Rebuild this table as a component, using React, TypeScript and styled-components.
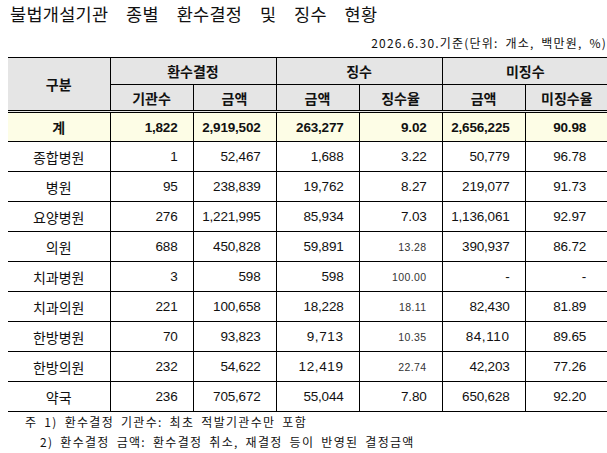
import React from "react";
import styled, { createGlobalStyle } from "styled-components";

const GlobalStyle = createGlobalStyle`
  html, body {
    margin: 0;
    padding: 0;
    background: #ffffff;
    overflow: hidden;
  }
  body {
    font-family: "Noto Sans CJK KR", "Liberation Sans", sans-serif;
    color: #000;
  }
`;

const Page = styled.div`
  width: 607px;
  display: flex;
  flex-direction: column;
`;

const Title = styled.h1`
  margin: 0;
  height: 28px;
  line-height: 28px;
  padding-left: 10px;
  font-family: "Noto Sans CJK KR", sans-serif;
  font-size: 17.5px;
  font-weight: 400;
  letter-spacing: 0.3px;
  word-spacing: 13.5px;
  color: #111;
`;

const Basis = styled.div`
  height: 29px;
  line-height: 29px;
  text-align: right;
  padding-right: 0;
  font-family: "Noto Sans CJK KR", sans-serif;
  font-size: 12px;
  letter-spacing: 1.2px;
  word-spacing: 3px;
  color: #111;
`;

const Table = styled.table`
  margin-left: 8px;
  width: 600px;
  border-collapse: collapse;
  table-layout: fixed;
  font-family: "Liberation Sans", "Noto Sans CJK KR", sans-serif;
`;

const HeadRow = styled.tr<{ $h: number }>`
  height: ${(p) => p.$h}px;
`;

const Th = styled.th<{ $double?: boolean }>`
  background: #e5e5e5;
  border: 1px solid #000;
  border-bottom: ${(p) => (p.$double ? "3px double #000" : "1px solid #000")};
  padding: 0;
  font-family: "Noto Sans CJK KR", sans-serif;
  font-size: 14px;
  font-weight: 700;
  color: #111;
  text-align: center;
  &:first-child {
    border-left: none;
  }
  &:last-child {
    border-right: none;
  }
`;

const Row = styled.tr<{ $total?: boolean }>`
  height: 30px;
  background: ${(p) => (p.$total ? "#fdfde6" : "#ffffff")};
  font-weight: ${(p) => (p.$total ? 700 : 400)};
`;

const Label = styled.td`
  border: 1px solid #000;
  border-left: none;
  padding: 0;
  text-align: center;
  font-family: "Noto Sans CJK KR", sans-serif;
  font-size: 14px;
  color: #111;
`;

const Num = styled.td<{ $kind?: "small" | "spaced"; $last?: boolean }>`
  border: 1px solid #000;
  border-right: ${(p) => (p.$last ? "none" : "1px solid #000")};
  padding: 0 ${(p) => (p.$last ? 22 : 15)}px 0 0;
  text-align: right;
  font-size: ${(p) => (p.$kind === "small" ? "10.5px" : "13.5px")};
  letter-spacing: ${(p) =>
    p.$kind === "small" ? "0.4px" : p.$kind === "spaced" ? "0.6px" : "-0.2px"};
  color: ${(p) => (p.$kind === "small" ? "#333" : "#111")};
`;

const Notes = styled.div`
  display: flex;
  flex-direction: column;
  font-family: "Noto Sans CJK KR", sans-serif;
  font-size: 12px;
  letter-spacing: 1.3px;
  word-spacing: 3px;
  color: #111;
`;

const Note = styled.div<{ $indent: number }>`
  height: 20px;
  line-height: 20px;
  padding-left: ${(p) => p.$indent}px;
`;

type Cell = { v: string; kind?: "small" | "spaced" };

const rows: { name: string; total?: boolean; cells: Cell[] }[] = [
  {
    name: "계",
    total: true,
    cells: [{ v: "1,822" }, { v: "2,919,502" }, { v: "263,277" }, { v: "9.02" }, { v: "2,656,225" }, { v: "90.98" }],
  },
  {
    name: "종합병원",
    cells: [{ v: "1" }, { v: "52,467" }, { v: "1,688" }, { v: "3.22" }, { v: "50,779" }, { v: "96.78" }],
  },
  {
    name: "병원",
    cells: [{ v: "95" }, { v: "238,839" }, { v: "19,762" }, { v: "8.27" }, { v: "219,077" }, { v: "91.73" }],
  },
  {
    name: "요양병원",
    cells: [{ v: "276" }, { v: "1,221,995" }, { v: "85,934" }, { v: "7.03" }, { v: "1,136,061" }, { v: "92.97" }],
  },
  {
    name: "의원",
    cells: [{ v: "688" }, { v: "450,828" }, { v: "59,891" }, { v: "13.28", kind: "small" }, { v: "390,937" }, { v: "86.72" }],
  },
  {
    name: "치과병원",
    cells: [{ v: "3" }, { v: "598" }, { v: "598" }, { v: "100.00", kind: "small" }, { v: "-" }, { v: "-" }],
  },
  {
    name: "치과의원",
    cells: [{ v: "221" }, { v: "100,658" }, { v: "18,228" }, { v: "18.11", kind: "small" }, { v: "82,430" }, { v: "81.89" }],
  },
  {
    name: "한방병원",
    cells: [{ v: "70" }, { v: "93,823" }, { v: "9,713", kind: "spaced" }, { v: "10.35", kind: "small" }, { v: "84,110", kind: "spaced" }, { v: "89.65" }],
  },
  {
    name: "한방의원",
    cells: [{ v: "232" }, { v: "54,622" }, { v: "12,419", kind: "spaced" }, { v: "22.74", kind: "small" }, { v: "42,203" }, { v: "77.26" }],
  },
  {
    name: "약국",
    cells: [{ v: "236" }, { v: "705,672" }, { v: "55,044" }, { v: "7.80" }, { v: "650,628" }, { v: "92.20" }],
  },
];

export default function App() {
  return (
    <Page>
      <GlobalStyle />
      <Title>불법개설기관 종별 환수결정 및 징수 현황</Title>
      <Basis>2026.6.30.기준(단위: 개소, 백만원, %)</Basis>
      <Table>
        <colgroup>
          <col style={{ width: 102 }} />
          <col style={{ width: 83 }} />
          <col style={{ width: 83 }} />
          <col style={{ width: 83 }} />
          <col style={{ width: 83 }} />
          <col style={{ width: 83 }} />
          <col style={{ width: 83 }} />
        </colgroup>
        <thead>
          <HeadRow $h={27}>
            <Th rowSpan={2} $double>
              구분
            </Th>
            <Th colSpan={2}>환수결정</Th>
            <Th colSpan={2}>징수</Th>
            <Th colSpan={2}>미징수</Th>
          </HeadRow>
          <HeadRow $h={27}>
            <Th $double>기관수</Th>
            <Th $double>금액</Th>
            <Th $double>금액</Th>
            <Th $double>징수율</Th>
            <Th $double>금액</Th>
            <Th $double>미징수율</Th>
          </HeadRow>
        </thead>
        <tbody>
          {rows.map((r) => (
            <Row key={r.name} $total={r.total}>
              <Label>{r.name}</Label>
              {r.cells.map((c, i) => (
                <Num key={i} $kind={c.kind} $last={i === r.cells.length - 1}>
                  {c.v}
                </Num>
              ))}
            </Row>
          ))}
        </tbody>
      </Table>
      <Notes>
        <Note $indent={25}>주 1) 환수결정 기관수: 최초 적발기관수만 포함</Note>
        <Note $indent={40}>2) 환수결정 금액: 환수결정 취소, 재결정 등이 반영된 결정금액</Note>
      </Notes>
    </Page>
  );
}
